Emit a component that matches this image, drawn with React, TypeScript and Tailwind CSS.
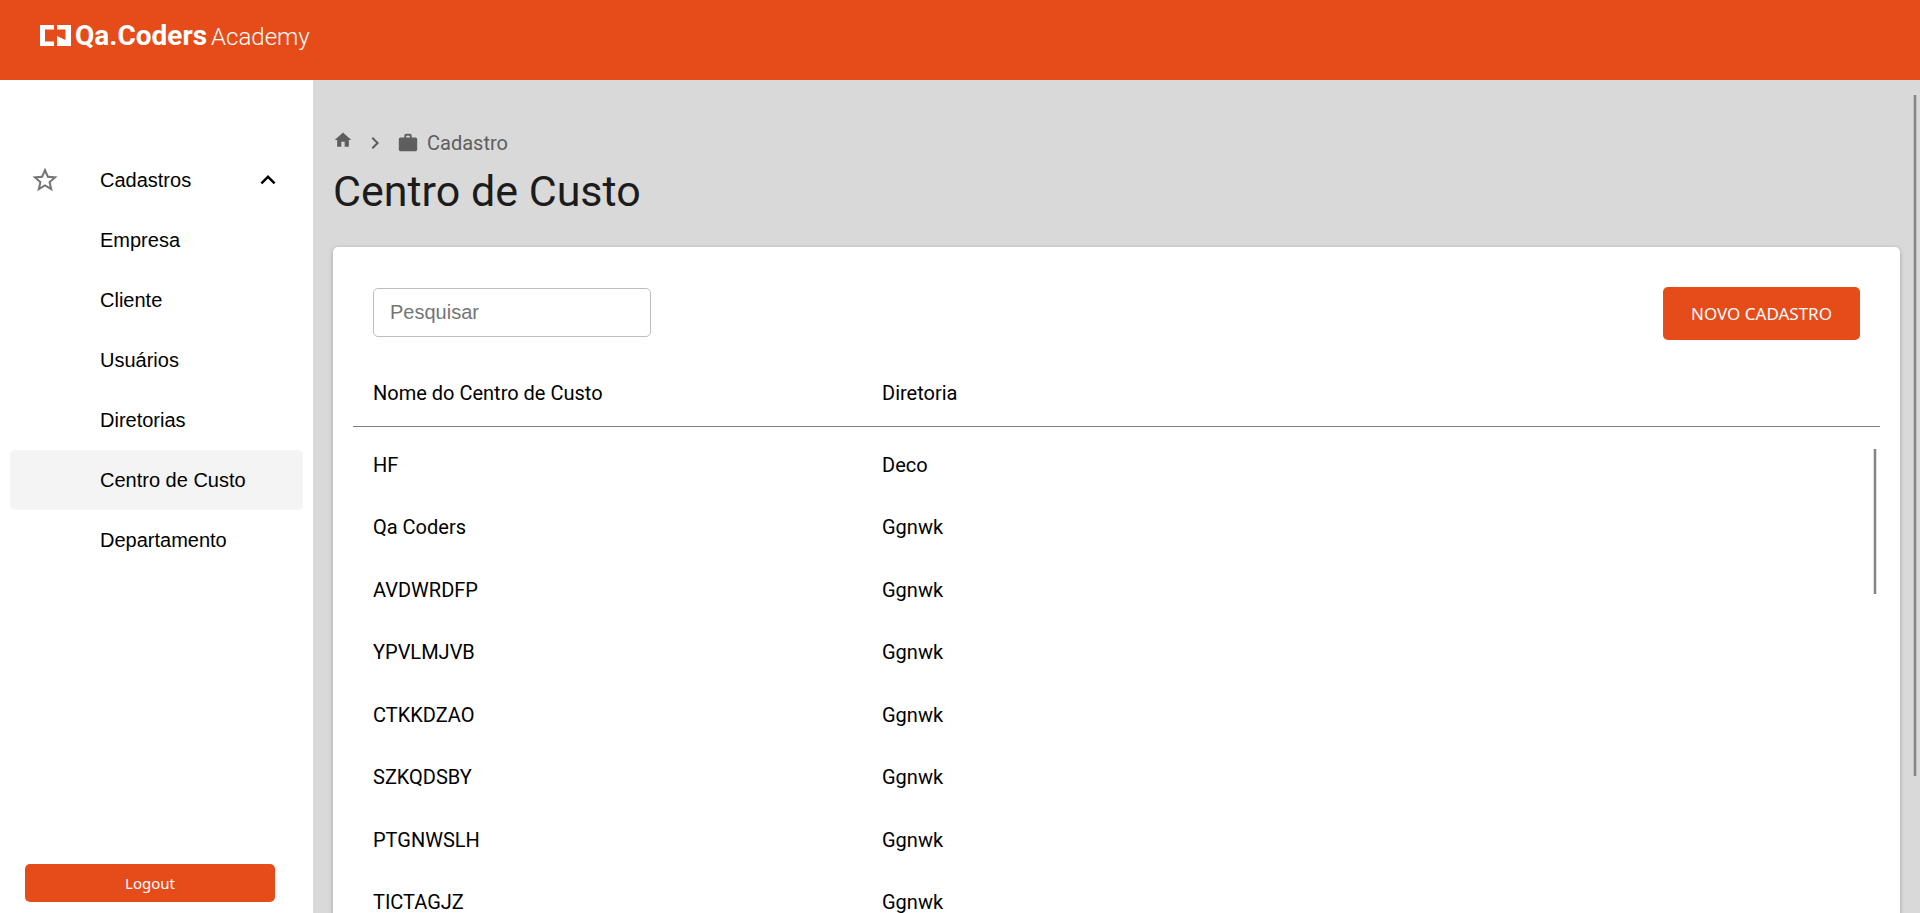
import { MdExpandLess, MdHome, MdNavigateNext, MdStarBorder, MdWork } from "react-icons/md";

const menuItems = [
  { label: "Empresa", active: false },
  { label: "Cliente", active: false },
  { label: "Usuários", active: false },
  { label: "Diretorias", active: false },
  { label: "Centro de Custo", active: true },
  { label: "Departamento", active: false },
];

const rows = [
  ["HF", "Deco"],
  ["Qa Coders", "Ggnwk"],
  ["AVDWRDFP", "Ggnwk"],
  ["YPVLMJVB", "Ggnwk"],
  ["CTKKDZAO", "Ggnwk"],
  ["SZKQDSBY", "Ggnwk"],
  ["PTGNWSLH", "Ggnwk"],
  ["TICTAGJZ", "Ggnwk"],
];

function Logo() {
  return (
    <a href="#" className="flex items-center gap-1 text-white">
      <svg viewBox="0 0 31 21" className="mb-0.5 h-[21px] w-[31px]" fill="currentColor" aria-hidden="true">
        <path d="M0 0H14V4.500H5V16.500H14V21H0Z" />
        <path d="M17 0H31V21H17V11L25.500 15V4.500H17Z" />
      </svg>
      <span className="flex items-baseline gap-1 whitespace-nowrap font-['Roboto',sans-serif]">
        <span className="text-[28px] leading-8 font-bold">Qa.Coders</span>
        <span className="text-2xl leading-8 font-light">Academy</span>
      </span>
    </a>
  );
}

function Sidebar() {
  return (
    <aside className="flex w-[313px] shrink-0 flex-col justify-between bg-white pt-[70px] pb-[11px] font-['Liberation_Sans',sans-serif] text-xl text-black">
      <nav className="flex flex-col px-[10px]">
        <button type="button" aria-expanded="true" className="flex h-[60px] items-center px-5 text-left">
          <MdStarBorder className="size-[30px] text-[#757575]" aria-hidden="true" />
          <span className="flex-1 pl-10">Cadastros</span>
          <MdExpandLess className="size-[30px] text-black" aria-hidden="true" />
        </button>
        {menuItems.map((item) => (
          <a
            key={item.label}
            href="#"
            aria-current={item.active ? "page" : undefined}
            className={
              item.active
                ? "flex h-[60px] items-center rounded-[5px] bg-[#f4f4f4] pl-[90px]"
                : "flex h-[60px] items-center rounded-[5px] pl-[90px]"
            }
          >
            {item.label}
          </a>
        ))}
      </nav>
      <button
        type="button"
        className="mr-[38px] ml-[25px] h-[38px] rounded-[5px] bg-[#e64c1a] font-['Noto_Sans',sans-serif] text-[15px] text-white"
      >
        Logout
      </button>
    </aside>
  );
}

function Breadcrumb() {
  return (
    <nav aria-label="breadcrumb" className="flex h-[30px] items-center text-[#5e5e5e]">
      <a href="#" aria-label="Home" className="pb-1.5">
        <MdHome className="size-5" aria-hidden="true" />
      </a>
      <MdNavigateNext className="mx-[10px] size-6" aria-hidden="true" />
      <a href="#" className="flex items-center gap-2 text-xl">
        <MdWork className="size-[22px]" aria-hidden="true" />
        Cadastro
      </a>
    </nav>
  );
}

function CostCenterTable() {
  return (
    <table className="mt-5 w-full table-fixed border-collapse text-left text-xl text-black">
      <thead>
        <tr className="h-[66px] border-b border-[#808080]">
          <th scope="col" className="px-5 font-normal">Nome do Centro de Custo</th>
          <th scope="col" className="px-5 font-normal">Diretoria</th>
          <td />
        </tr>
      </thead>
      <tbody className="before:block before:h-[7px] before:content-['']">
        {rows.map(([name, board]) => (
          <tr key={name} className="odd:h-[62px] even:h-[63px]">
            <td className="px-5">{name}</td>
            <td className="px-5">{board}</td>
            <td />
          </tr>
        ))}
      </tbody>
    </table>
  );
}

export default function App() {
  return (
    <div className="flex h-screen flex-col overflow-hidden bg-[#d9d9d9] font-['Roboto',sans-serif]">
      <header className="flex h-20 shrink-0 items-start bg-[#e64c1a] px-10 pt-5">
        <Logo />
      </header>
      <div className="flex min-h-0 flex-1">
        <Sidebar />
        <main className="relative min-w-0 flex-1 overflow-hidden px-5 pt-12">
          <Breadcrumb />
          <h1 className="mt-1 text-[43px] leading-[58px] text-[#1c1c1c]">Centro de Custo</h1>
          <section className="relative mt-[27px] rounded-[5px] bg-white px-5 pt-10 pb-20 shadow-[0_1px_4px_rgba(0,0,0,0.25)]">
            <div className="flex items-start justify-between px-5">
              <input
                type="text"
                aria-label="Pesquisar"
                placeholder="Pesquisar"
                className="mt-px h-[49px] w-[278px] rounded-[5px] border border-[#bdbdbd] bg-white px-4 font-['Liberation_Sans',sans-serif] text-xl text-black placeholder:text-[#757575]"
              />
              <button
                type="button"
                className="h-[53px] w-[197px] rounded-[5px] bg-[#e64c1a] font-['Noto_Sans',sans-serif] text-[17px] text-white"
              >
                NOVO CADASTRO
              </button>
            </div>
            <CostCenterTable />
            <div className="absolute top-[202px] right-[23px] h-[145px] w-1 border-x border-[#dedede] bg-[#858585]" />
          </section>
          <div className="absolute top-[15px] right-[3px] h-[681px] w-1 border-x border-[#bfbfbf] bg-[#858585]" />
        </main>
      </div>
    </div>
  );
}
